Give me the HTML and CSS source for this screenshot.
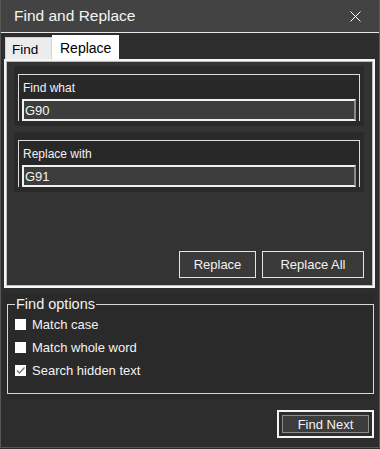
FILE: index.html
```
<html><head>
	<title>Find and Replace</title>
	<link rel="stylesheet" href="styles.css">
</head>
<body>
	<div class="window">
		<div class="titlebar">
			<span class="title">Find and Replace</span>
			<svg class="close" width="11" height="11" viewBox="0 0 11 11">
				<path d="M0.5 0.5 L10.5 10.5 M10.5 0.5 L0.5 10.5" stroke="#fff" stroke-width="1" fill="none"/>
			</svg>
		</div>

		<div class="tabs">
			<div class="tab">Find</div>
			<div class="tab active">Replace</div>
		</div>

		<div class="panel">
			<div class="field">
				<div class="box">
					<div class="label">Find what</div>
					<input class="text" type="text" value="G90">
				</div>
			</div>
			<div class="field">
				<div class="box">
					<div class="label">Replace with</div>
					<input class="text" type="text" value="G91">
				</div>
			</div>
			<div class="buttons">
				<div class="btn replace">Replace</div>
				<div class="btn replace-all">Replace All</div>
			</div>
		</div>

		<div class="options">
			<fieldset>
				<legend>Find options</legend>
				<div class="check"><span class="cb"></span>Match case</div>
				<div class="check"><span class="cb"></span>Match whole word</div>
				<div class="check"><span class="cb">
					<svg width="11" height="11" viewBox="0 0 11 11"><path d="M2 5.5 L4.5 8 L9.5 2.5" stroke="#777" stroke-width="1.3" fill="none"/></svg>
				</span>Search hidden text</div>
			</fieldset>
		</div>

		<div class="footer">
			<div class="default-btn">
				<div class="btn find-next">Find Next</div>
			</div>
		</div>
	</div>
</body></html>
```
FILE: styles.css
```
		body {
			margin: 0;
			width: 380px;
			height: 449px;
			background-color: #2d2d2d;
			font-family: "Liberation Sans", Arial, sans-serif;
			color: #f2f2f2;
			overflow: hidden;
		}
		.window {
			box-sizing: border-box;
			width: 380px;
			height: 448px;
			border: 1px solid #575757;
			border-top: none;
		}
		.titlebar {
			height: 32px;
			background-color: #434343;
			border-bottom: 1px solid #e8e8e8;
			display: flex;
			align-items: center;
			justify-content: space-between;
			padding: 0 18px 0 13px;
		}
		.title {
			font-size: 15.5px;
			color: #f4f4f4;
		}
		.close {
			display: block;
		}
		.tabs {
			display: flex;
			align-items: flex-end;
			padding-left: 4px;
			margin-top: 2px;
			height: 24px;
		}
		.tab {
			box-sizing: border-box;
			height: 22px;
			width: 47px;
			background-color: #ececec;
			border: 1px solid #d4d4d4;
			border-bottom: none;
			color: #000;
			font-size: 13.5px;
			padding: 4px 0 0 6px;
		}
		.tab.active {
			height: 24px;
			width: 67px;
			background-color: #fff;
			border-color: #fff;
			font-size: 14px;
			padding: 4px 0 0 7px;
		}
		.panel {
			box-sizing: border-box;
			width: 371px;
			height: 229px;
			margin-left: 3px;
			border: 2px solid #f6f6f6;
			box-shadow: inset 0 0 0 1px #bdbdbd;
			background-color: #333;
			padding: 5px 9px 8px 8px;
			display: flex;
			flex-direction: column;
		}
		.field {
			background-color: #2a2a2a;
			padding: 8px 4px 5px 4px;
		}
		.field + .field {
			margin-top: 6px;
		}
		.box {
			box-sizing: border-box;
			height: 47px;
			border: 1px solid #dcdcdc;
			border-bottom: none;
			background-color: #282828;
			display: flex;
			flex-direction: column;
		}
		.label {
			height: 24px;
			line-height: 26px;
			padding-left: 4px;
			font-size: 12px;
		}
		.text {
			box-sizing: border-box;
			height: 22px;
			margin: 0 3px;
			border: 2px solid #f0f0f0;
			border-right-color: #8a8a8a;
			background-color: #3d3d3d;
			color: #f4f4f4;
			font-family: "Liberation Sans", Arial, sans-serif;
			font-size: 13px;
			padding: 0 1px;
			outline: none;
		}
		.buttons {
			margin-top: auto;
			display: flex;
			justify-content: flex-end;
			gap: 6px;
		}
		.btn {
			box-sizing: border-box;
			height: 27px;
			border: 1px solid #e4e4e4;
			background-color: #3a3a3a;
			font-size: 13px;
			display: flex;
			align-items: center;
			justify-content: center;
		}
		.replace {
			width: 77px;
		}
		.replace-all {
			width: 102px;
		}
		.options {
			margin: 6px 5px 0 2px;
			padding: 2px 0 5px 4px;
			background-color: #2a2a2a;
		}
		fieldset {
			margin: 0;
			border: 1px solid #d8d8d8;
			padding: 0 7px 11px 7px;
		}
		legend {
			padding: 0 1px;
			font-size: 14.5px;
			line-height: 17px;
		}
		.check {
			height: 23px;
			display: flex;
			align-items: center;
			font-size: 13px;
		}
		.cb {
			width: 11px;
			height: 11px;
			background-color: #fff;
			margin-right: 6px;
			display: flex;
		}
		.footer {
			display: flex;
			justify-content: flex-end;
			padding: 11px 5px 0 0;
		}
		.default-btn {
			border: 2px solid #f4f4f4;
			padding: 3px;
		}
		.btn.find-next {
			width: 87px;
			height: 18px;
			border-color: #8c8c8c;
			background-color: #3c3c3c;
		}
```
